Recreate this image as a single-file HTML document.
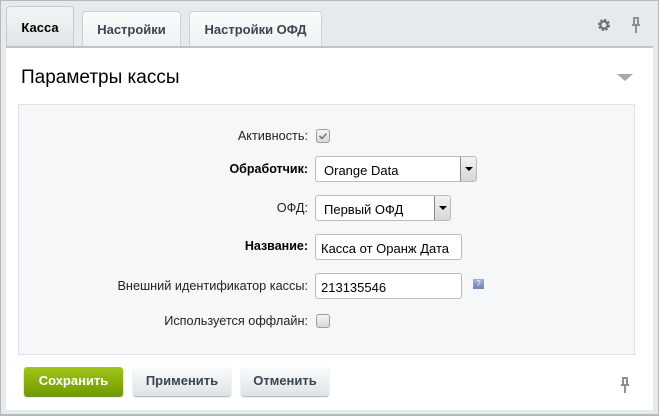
<!DOCTYPE html>
<html><head><meta charset="utf-8"><style>
*{box-sizing:border-box;margin:0;padding:0}
body{width:659px;height:416px;background:#e5ebec;font-family:"Liberation Sans",Arial,sans-serif;font-size:13px;color:#000;position:relative;overflow:hidden}
.frame{position:absolute;left:0;top:0;width:659px;height:416px;border:1px solid #b5b9b9;border-bottom:2px solid #b5b9b9}
.tab{position:absolute;height:40px;border:1px solid #cbd2d4;border-bottom:none;border-radius:4px 4px 0 0;background:linear-gradient(#fbfcfc,#eef1f2);font-weight:bold;color:#3b4550;font-size:13px;text-align:center;line-height:30px}
.panel{position:absolute;left:6px;top:46px;width:647px;height:364px;background:#fff;border-top:2px solid #bcc4c6}
.box{position:absolute;left:18px;top:104px;width:617px;height:251px;background:#f5f7f8;border:1px solid #dbe3e7}
.lbl{position:absolute;right:351px;font-size:12.7px;color:#222;text-align:right}
.b{font-weight:bold;color:#000;font-size:12.5px}
.inp{position:absolute;left:315px;height:26px;border:1px solid #b7bcbe;border-radius:3px;background:#fff;font-size:13px;padding:6px 0 0 5px;color:#000}
.sel{padding-left:8px}
.arr{position:absolute;right:0;top:0;width:16px;height:24px;background:linear-gradient(#f3f3f3,#d6d6d6);border-left:1px solid #888;border-radius:0 2px 2px 0}
.arr:after{content:"";position:absolute;left:4px;top:10px;border:4px solid transparent;border-top:4px solid #000;border-bottom:none}
.cb{position:absolute;left:316px;width:14px;height:14px;border:1px solid #9a9fa3;border-radius:3px;background:linear-gradient(#f5f5f5,#d8d8d8)}
.btn{position:absolute;top:367px;height:29px;border-radius:3px;font-weight:bold;font-size:13px;text-align:center;line-height:28px;background:linear-gradient(#fbfcfc,#dde3e6);color:#3b4550;box-shadow:0 1px 1px #a6afb3}
</style></head><body>
<div class="frame"></div>
<div class="tab" style="left:6px;top:6px;width:68px;height:42px;background:linear-gradient(#f2f5f5,#dfe5e6);color:#000;line-height:42px;border-color:#c3cbcd">Касса</div>
<div class="tab" style="left:82px;top:11px;width:99px;height:35px;line-height:35px">Настройки</div>
<div class="tab" style="left:189px;top:11px;width:133px;height:35px;line-height:35px">Настройки ОФД</div>
<svg style="position:absolute;left:597px;top:18px" width="14" height="14" viewBox="0 0 14 14"><circle cx="7" cy="7" r="4.5" fill="none" stroke="#6a6e72" stroke-width="3" stroke-dasharray="2.2 1.3"/><circle cx="7" cy="7" r="3.5" fill="none" stroke="#6a6e72" stroke-width="2"/></svg>
<svg style="position:absolute;left:631px;top:17px" width="10" height="17" viewBox="0 0 10 17"><path d="M2 1h6M3 1v6M7 1v6M1 8h8M5 8v8" stroke="#8a9094" stroke-width="2" fill="none"/></svg>
<div class="panel"></div>
<div style="position:absolute;left:21px;top:67px;font-size:19px;color:#000">Параметры кассы</div>
<div style="position:absolute;left:617px;top:74px;border:8px solid transparent;border-top:7px solid #a4a9ad;border-bottom:none"></div>
<div class="box"></div>
<div class="lbl" style="top:129px">Активность:</div>
<div class="cb" style="top:129px"><svg width="12" height="12" style="position:absolute;left:0;top:0"><path d="M2.5 6l2.5 2.5 4.5-5" stroke="#666" stroke-width="1.3" fill="none"/></svg></div>
<div class="lbl b" style="top:162px">Обработчик:</div>
<div class="inp sel" style="top:156px;width:162px">Orange Data<div class="arr"></div></div>
<div class="lbl" style="top:201px">ОФД:</div>
<div class="inp sel" style="top:195px;width:136px">Первый ОФД<div class="arr"></div></div>
<div class="lbl b" style="top:239px">Название:</div>
<div class="inp" style="top:234px;width:147px">Касса от Оранж Дата</div>
<div class="lbl" style="top:279px">Внешний идентификатор кассы:</div>
<div class="inp" style="top:273px;width:147px">213135546</div>
<div style="position:absolute;left:473px;top:279px;width:11px;height:10px;background:linear-gradient(#a3afd6,#7582b8);color:#fff;font-size:8px;text-align:center;line-height:10px">?</div>
<div class="lbl" style="top:314px">Используется оффлайн:</div>
<div class="cb" style="top:314px"></div>
<div class="btn" style="left:24px;width:99px;background:linear-gradient(#a3c51a,#6f9a00);color:#fff;box-shadow:0 1px 1px #5d7a10">Сохранить</div>
<div class="btn" style="left:133px;width:98px">Применить</div>
<div class="btn" style="left:241px;width:88px">Отменить</div>
<svg style="position:absolute;left:620px;top:377px" width="10" height="17" viewBox="0 0 10 17"><path d="M2 1h6M3 1v6M7 1v6M1 8h8M5 8v8" stroke="#8a9094" stroke-width="2" fill="none"/></svg>
</body></html>
